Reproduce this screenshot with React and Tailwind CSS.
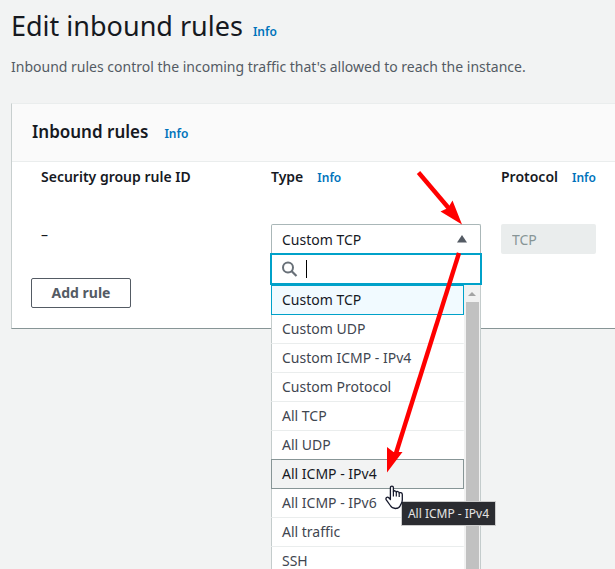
import React, { useState } from "react";

const TYPES = [
  "Custom TCP",
  "Custom UDP",
  "Custom ICMP - IPv4",
  "Custom Protocol",
  "All TCP",
  "All UDP",
  "All ICMP - IPv4",
  "All ICMP - IPv6",
  "All traffic",
  "SSH",
];

function InfoLink() {
  return (
    <a href="#info" className="text-xs font-semibold text-[#0073bb]">
      Info
    </a>
  );
}

function optionStyle(name, selected) {
  if (name === selected) return "relative z-10 border-[#00a1c9] bg-[#f1faff] text-[#16191f]";
  if (name === "All ICMP - IPv4") return "relative z-10 border-[#879596] bg-[#f2f3f3] text-[#16191f]";
  return "border-x-transparent border-y-[#eaeded] bg-white text-[#3f4650]";
}

function Tooltip() {
  return (
    <div
      role="tooltip"
      className="absolute top-[42px] left-[130px] z-20 h-[25px] w-[95px] border border-[#cccccc] bg-[#2b2c31] text-center text-xs leading-[23px] whitespace-nowrap text-[#e4e4e4]"
    >
      All ICMP - IPv4
    </div>
  );
}

function HandCursor() {
  return (
    <svg
      className="pointer-events-none absolute top-[26px] left-[114px] z-30"
      width="20"
      height="26"
      viewBox="0 0 20 26"
      aria-hidden="true"
    >
      <path
        d="M5.400 14.500V2.800C5.400 .5 8.400 .5 8.400 2.800V6.800C8.600 5.300 11.300 5.400 11.300 7.300C11.600 6 14.200 6.200 14.200 8.200C14.600 7.200 17.300 7.300 17.300 9.500V15C17.300 18 15.800 19 15.300 20.500C14.500 22.600 12.800 23.500 10.500 23.500C7.800 23.500 6.500 22.500 5.300 20.500L1.300 14.800C.2 13 2.300 11.300 3.800 12.800Z"
        fill="#fff"
        stroke="#15182b"
        strokeWidth="1.3"
        strokeLinejoin="round"
      />
      <path d="M8.400 6.500V11.500M11.300 7.300V11.500M14.200 8.200V12" stroke="#15182b" strokeWidth="1.2" fill="none" />
    </svg>
  );
}

function TypeSelect() {
  const [selected, setSelected] = useState("Custom TCP");
  const [query, setQuery] = useState("");

  return (
    <div className="relative w-[210px]">
      <select
        aria-labelledby="type-label"
        value={selected}
        onChange={(e) => setSelected(e.target.value)}
        className="block h-[30px] w-full appearance-none rounded-t-xs border border-b-0 border-[#aab7b8] bg-white px-[10px] text-sm text-[#16191f] outline-none"
      >
        {TYPES.map((t) => (
          <option key={t}>{t}</option>
        ))}
      </select>
      <svg
        className="pointer-events-none absolute top-[11px] right-[14px]"
        width="10"
        height="8"
        viewBox="0 0 10 8"
        aria-hidden="true"
      >
        <path d="M5 0L10 7.5H0Z" fill="#545b64" />
      </svg>

      <div className="absolute top-[29px] -right-px -left-px z-10">
        <div className="relative z-20 flex h-8 items-center border-2 border-[#00a1c9] bg-white px-[10px]">
          <svg width="16" height="16" viewBox="0 0 16 16" fill="none" aria-hidden="true">
            <circle cx="6" cy="6.500" r="5" stroke="#687078" strokeWidth="2" />
            <path d="M9.500 10L14.500 15" stroke="#687078" strokeWidth="2.2" />
          </svg>
          <span className="ml-2 h-[18px] w-px bg-black" />
          <input
            type="text"
            aria-label="Search types"
            value={query}
            onChange={(e) => setQuery(e.target.value)}
            className="min-w-0 flex-1 bg-transparent text-sm caret-transparent outline-none"
          />
        </div>
        <div className="mx-px flex h-[320px] border-r border-l border-[#c4cccc] bg-white">
          <ul role="listbox" aria-label="Type" className="-ml-px min-w-0 flex-1">
            {TYPES.map((t) => (
              <li key={t} className="relative -mb-px">
                <button
                  type="button"
                  role="option"
                  aria-selected={t === selected}
                  onClick={() => setSelected(t)}
                  className={`block h-[30px] w-full border bg-clip-padding px-[10px] text-left text-sm ${optionStyle(t, selected)}`}
                >
                  {t}
                </button>
                {t === "All ICMP - IPv4" && (
                  <>
                    <Tooltip />
                    <HandCursor />
                  </>
                )}
              </li>
            ))}
          </ul>
          <div className="flex w-4 flex-col items-center bg-[#f1f1f1]" aria-hidden="true">
            <svg width="16" height="17" viewBox="0 0 16 17">
              <path d="M8 7L12 11H4Z" fill="#a3a3a3" />
            </svg>
            <div className="w-[13px] flex-1 bg-[#c1c1c1]" />
          </div>
        </div>
      </div>
    </div>
  );
}

function Arrows() {
  return (
    <svg
      className="pointer-events-none absolute top-0 left-0 z-20"
      width="520"
      height="520"
      viewBox="0 0 520 520"
      fill="#ff0000"
      aria-hidden="true"
    >
      <path d="M418.500 172.500L452 212" stroke="#ff0000" strokeWidth="4.4" />
      <path d="M462 224.500L440.500 211.500L448 208L452.500 200.500Z" />
      <path d="M459 253L394.500 458" stroke="#ff0000" strokeWidth="4.4" />
      <path d="M387 472.500V447L393.500 452L402.500 452Z" />
    </svg>
  );
}

export default function App() {
  return (
    <main className="relative min-h-screen overflow-hidden bg-[#f2f3f3] pl-[11px] font-['Noto_Sans',sans-serif] text-sm text-[#16191f]">
      <header className="pt-2">
        <div className="flex items-baseline gap-[10px]">
          <h1 className="text-[27px] leading-9">Edit inbound rules</h1>
          <InfoLink />
        </div>
        <p className="mt-[13px] leading-5 text-[#545b64]">
          Inbound rules control the incoming traffic that's allowed to reach the instance.
        </p>
      </header>

      <section className="mt-[26px] border-t border-b border-l border-t-[#eaeded] border-b-[#879596] border-l-[#c8cfcf] bg-white">
        <div className="flex h-[58px] items-baseline gap-4 border-b border-[#eaeded] bg-[#fafafa] px-5 pt-4">
          <h2 className="text-[17px] leading-6 font-semibold">Inbound rules</h2>
          <InfoLink />
        </div>
        <div className="grid grid-cols-[230px_230px_1fr] pt-[5px] pl-[29px]">
          <div className="font-semibold">Security group rule ID</div>
          <div className="flex items-baseline gap-[14px]">
            <span id="type-label" className="font-semibold">Type</span>
            <InfoLink />
          </div>
          <div className="flex items-baseline gap-[14px]">
            <label htmlFor="protocol" className="font-semibold">Protocol</label>
            <InfoLink />
          </div>
          <div className="pt-[38px]">–</div>
          <div className="pt-[37px]">
            <TypeSelect />
          </div>
          <div className="pt-[37px]">
            <input
              id="protocol"
              disabled
              value="TCP"
              readOnly
              className="block h-[30px] w-[95px] rounded-xs bg-[#eaeded] px-[11px] text-[#879596]"
            />
          </div>
        </div>
        <div className="px-[19px] pt-6 pb-5">
          <button
            type="button"
            className="h-[30px] w-[100px] rounded-xs border border-[#545b64] bg-white font-bold text-[#545b64]"
          >
            Add rule
          </button>
        </div>
      </section>
      <Arrows />
    </main>
  );
}
